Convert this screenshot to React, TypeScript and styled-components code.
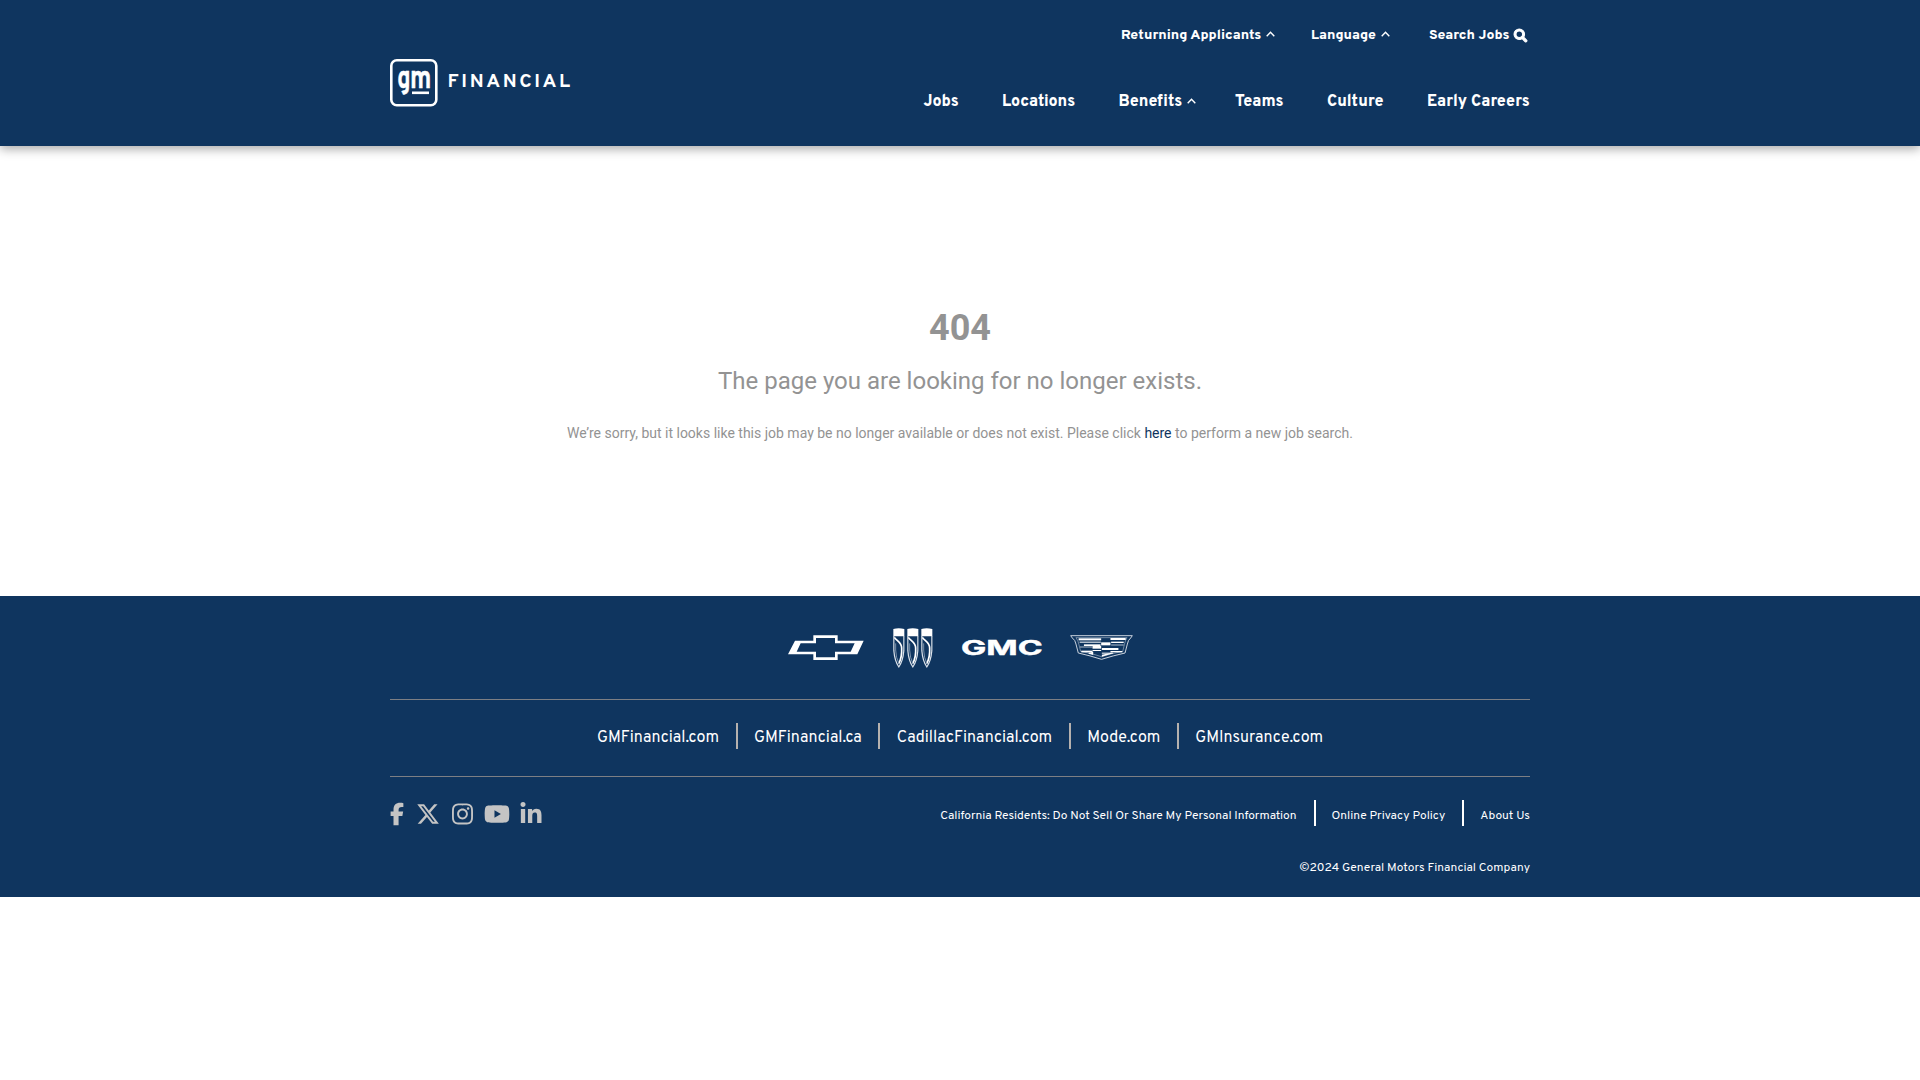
import React from "react";
import styled, { createGlobalStyle } from "styled-components";
import { FaFacebookF, FaXTwitter, FaInstagram, FaYoutube, FaLinkedinIn } from "react-icons/fa6";
import { FaSearch } from "react-icons/fa";

const NAVY = "#0f355f";

const GlobalStyle = createGlobalStyle`
  * { box-sizing: border-box; }
  body { margin: 0; background: #fff; font-family: Overpass, Roboto, sans-serif; }
  svg { display: block; }
`;

const Header = styled.header`
  height: 146px;
  background: ${NAVY};
  box-shadow: 0 3px 10px rgba(0, 0, 0, 0.34);
`;

const Container = styled.div`
  width: 1140px;
  margin: 0 auto;
`;

const HeaderInner = styled(Container)`
  display: flex;
  justify-content: space-between;
`;

const LogoLink = styled.a`
  margin-top: 59px;
  height: 48px;
`;

const Navs = styled.div`
  display: flex;
  flex-direction: column;
  align-items: flex-end;
`;

const TopNav = styled.nav`
  display: grid;
  grid-template-columns: 190px 118px 101px;
  margin-top: 25px;
`;

const MainNav = styled.nav`
  display: grid;
  grid-template-columns: 78.5px 116.5px 116.5px 92px 100px 103px;
  margin-top: 44px;
`;

const NavLink = styled.a<{ $small?: boolean }>`
  display: flex;
  align-items: center;
  height: ${(p) => (p.$small ? 20 : 25)}px;
  gap: 5px;
  color: #fff;
  font-size: ${(p) => (p.$small ? 14 : 16)}px;
  font-weight: 800;
  white-space: nowrap;
`;

const Caret = styled.svg`
  width: 9px;
  height: 6px;
  margin-bottom: 2px;
  fill: none;
  stroke: #fff;
  stroke-width: 1.4;
`;

const SearchIcon = styled(FaSearch)`
  width: 13px;
  height: 13px;
  stroke: #fff;
  stroke-width: 40;
  overflow: visible;
`;

const Message = styled.main`
  height: 450px;
  padding-top: 161px;
  text-align: center;
  color: #939393;
  font-family: Roboto, sans-serif;
`;

const Code = styled.h1`
  margin: 0;
  font-size: 36px;
  line-height: 42px;
  font-weight: 700;
`;

const Lead = styled.p`
  margin: 16px 0 0;
  font-size: 24px;
  line-height: 32px;
`;

const Hint = styled.p`
  margin: 26px 0 0;
  font-size: 14px;
  line-height: 20px;
`;

const HintLink = styled.a`
  color: ${NAVY};
`;

const Footer = styled.footer`
  height: 301px;
  background: ${NAVY};
`;

const Brands = styled.div`
  display: flex;
  align-items: center;
  justify-content: center;
  gap: 29px;
  height: 103px;
`;

const Sites = styled.div`
  display: flex;
  justify-content: center;
  height: 78px;
  padding-top: 23px;
  border-top: 1px solid #7d7f84;
  border-bottom: 1px solid #7d7f84;
`;

const SiteLink = styled.a`
  padding: 0 16.5px;
  height: 26px;
  color: #fff;
  font-size: 16px;
  line-height: 30px;
  white-space: nowrap;

  & + & {
    border-left: 2px solid #b5b1ae;
  }
`;

const Bottom = styled.div`
  display: flex;
  justify-content: space-between;
  padding-top: 23px;
`;

const Social = styled.div`
  display: flex;
  align-items: center;
  height: 27px;
  color: #c4c4c4;
`;

const SocialLink = styled.a<{ $w: number; $gap: number }>`
  width: ${(p) => p.$w}px;
  margin-right: ${(p) => p.$gap}px;

  svg {
    width: 100%;
    height: 24px;
  }
`;

const Legal = styled.div`
  display: flex;
`;

const LegalLink = styled.a`
  height: 26px;
  padding: 4px 17px 0 16px;
  color: #fff;
  font-size: 12px;
  line-height: 24px;
  white-space: nowrap;

  & + & {
    border-left: 2px solid #fff;
  }
  &:last-child {
    padding-right: 0;
  }
`;

const Copyright = styled.div`
  margin-top: 31px;
  color: #fff;
  text-align: right;
  font-size: 12px;
  line-height: 20px;
`;

const Up = () => (
  <Caret viewBox="0 0 9 6">
    <path d="M0.7 5.2 L4.5 1.2 L8.3 5.2" />
  </Caret>
);

const Logo = () => (
  <svg width="184" height="48" viewBox="0 0 184 48" fill="#fff">
    <rect x="1.3" y="1.3" width="45" height="45" rx="5.5" fill="none" stroke="#fff" strokeWidth="2.6" />
    <g fontFamily="Overpass, Roboto, sans-serif" fontWeight="700" stroke="#fff" strokeWidth="0.5">
      <text transform="translate(7.2 28.800) scale(0.7 1)" fontSize="33">g</text>
      <text transform="translate(20 28.800) scale(0.74 1)" fontSize="33">m</text>
    </g>
    <rect x="22" y="32.5" width="17" height="2.6" />
    <text x="57.5" y="28.4" fontFamily="Overpass, Roboto, sans-serif" fontWeight="700" fontSize="19.5" textLength="122.5" lengthAdjust="spacing">
      FINANCIAL
    </text>
  </svg>
);

const Chevrolet = () => (
  <svg width="76" height="26" viewBox="54 74 228 78" fill="#fff">
    <path
      fillRule="evenodd"
      d="M75 91H130V75H203V91H281L262 132H203V149H130V132H54Z M92 99L80 124H138V141H195V124H242L254 99H195V83H138V99Z"
    />
  </svg>
);

const Shield = ({ x }: { x: number }) => (
  <g transform={`translate(${x} 0)`}>
    <path d="M1 3Q17 -1 34 3V25H1Z" fill="#fff" />
    <path d="M2.5 24V68Q5 99 17.5 117Q30 99 32.5 68V24" fill="none" stroke="#dbe2ea" strokeWidth="3.5" />
    <path d="M4 28C10 38 26 42 26 60C27 80 23 96 17 107" fill="none" stroke="#fff" strokeWidth="5" />
    <path d="M8 46V66Q9 90 17 105" fill="none" stroke="#8fa2b8" strokeWidth="2.5" />
  </g>
);

const Buick = () => (
  <svg width="40" height="40" viewBox="0 0 120 120">
    <Shield x={0} />
    <Shield x={42} />
    <Shield x={84} />
  </svg>
);

const GmcSvg = styled.svg`
  overflow: visible;
`;

const Gmc = () => (
  <GmcSvg width="80" height="16" viewBox="0 0 80 16" fill="#fff">
    <text
      transform="translate(-1 15.2) scale(1.72 1)"
      fontFamily="Inter, sans-serif"
      fontWeight="700"
      fontSize="20"
      textLength="47.5"
      lengthAdjust="spacingAndGlyphs"
      stroke="#fff"
      strokeWidth="0.4"
    >
      GMC
    </text>
  </GmcSvg>
);

const CadillacSvg = styled.svg`
  margin-left: -1px;
`;

const Cadillac = () => (
  <CadillacSvg width="63" height="26" viewBox="0 0 190 78" preserveAspectRatio="none" fill="none">
    <path d="M2 2H188L183 9Q175 15 173 27L166 54Q130 62 95 73Q61 62 25 54L18 27Q16 15 7 9Z" stroke="#c9d2dd" strokeWidth="3" />
    <path d="M18 8H172Q166 17 164 29L159 49Q126 55 95 65Q66 55 32 49L27 29Q25 17 18 8Z" stroke="#9fb0c3" strokeWidth="2" />
    <g fill="#fff">
      <rect x="26" y="10" width="68" height="6" />
      <rect x="122" y="9" width="46" height="6" />
      <rect x="29" y="20" width="64" height="3" />
      <rect x="124" y="20" width="38" height="4" />
      <rect x="94" y="22" width="28" height="9" />
      <rect x="42" y="28" width="50" height="5" />
      <rect x="68" y="33" width="26" height="8" />
      <rect x="96" y="39" width="50" height="6" />
      <rect x="124" y="29" width="38" height="2" />
      <rect x="30" y="35" width="38" height="2" />
      <rect x="122" y="48" width="36" height="4" />
      <rect x="68" y="45" width="26" height="3" />
      <rect x="34" y="47" width="34" height="5" />
      <rect x="96" y="53" width="34" height="3" />
      <path d="M56 53L70 50V60L56 56Z M96 59L126 53V56L96 65Z" />
    </g>
  </CadillacSvg>
);

export default function App() {
  return (
    <>
      <GlobalStyle />
      <Header>
        <HeaderInner>
          <LogoLink>
            <Logo />
          </LogoLink>
          <Navs>
            <TopNav>
              <NavLink $small>Returning Applicants<Up /></NavLink>
              <NavLink $small>Language<Up /></NavLink>
              <NavLink $small>Search Jobs<SearchIcon /></NavLink>
            </TopNav>
            <MainNav>
              <NavLink>Jobs</NavLink>
              <NavLink>Locations</NavLink>
              <NavLink>Benefits<Up /></NavLink>
              <NavLink>Teams</NavLink>
              <NavLink>Culture</NavLink>
              <NavLink>Early Careers</NavLink>
            </MainNav>
          </Navs>
        </HeaderInner>
      </Header>

      <Message>
        <Code>404</Code>
        <Lead>The page you are looking for no longer exists.</Lead>
        <Hint>
          We’re sorry, but it looks like this job may be no longer available or does not exist. Please click{" "}
          <HintLink>here</HintLink> to perform a new job search.
        </Hint>
      </Message>

      <Footer>
        <Container>
          <Brands>
            <Chevrolet />
            <Buick />
            <Gmc />
            <Cadillac />
          </Brands>
          <Sites>
            <SiteLink>GMFinancial.com</SiteLink>
            <SiteLink>GMFinancial.ca</SiteLink>
            <SiteLink>CadillacFinancial.com</SiteLink>
            <SiteLink>Mode.com</SiteLink>
            <SiteLink>GMInsurance.com</SiteLink>
          </Sites>
          <Bottom>
            <Social>
              <SocialLink $w={14} $gap={12}><FaFacebookF /></SocialLink>
              <SocialLink $w={24} $gap={12}><FaXTwitter /></SocialLink>
              <SocialLink $w={21} $gap={11}><FaInstagram /></SocialLink>
              <SocialLink $w={26} $gap={10}><FaYoutube /></SocialLink>
              <SocialLink $w={22} $gap={0}><FaLinkedinIn /></SocialLink>
            </Social>
            <Legal>
              <LegalLink>California Residents: Do Not Sell Or Share My Personal Information</LegalLink>
              <LegalLink>Online Privacy Policy</LegalLink>
              <LegalLink>About Us</LegalLink>
            </Legal>
          </Bottom>
          <Copyright>©2024 General Motors Financial Company</Copyright>
        </Container>
      </Footer>
    </>
  );
}
